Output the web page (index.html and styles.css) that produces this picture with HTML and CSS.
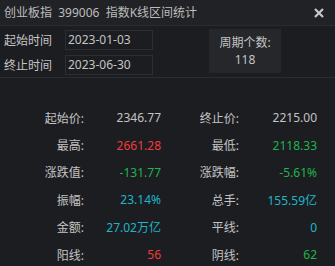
FILE: index.html
```html
<!DOCTYPE html>
<html lang="zh">
<head>
    <meta charset="UTF-8">
    <title>指数K线区间统计</title>
    <link rel="stylesheet" href="styles.css">
</head>
<body>
    <div class="dialog">
        <div class="titlebar">
            <span class="title">创业板指&nbsp;&nbsp;399006&nbsp;&nbsp;指数K线区间统计</span>
            <svg class="close" width="10" height="10" viewBox="0 0 10 10">
                <path d="M1 1 L9 9 M9 1 L1 9" stroke="#c9c9c9" stroke-width="2.2"/>
            </svg>
        </div>
        <div class="range">
            <div class="dates">
                <div class="daterow">
                    <span class="lbl">起始时间</span>
                    <div class="field">2023-01-03</div>
                </div>
                <div class="daterow">
                    <span class="lbl">终止时间</span>
                    <div class="field">2023-06-30</div>
                </div>
            </div>
            <div class="period">
                <p>周期个数:</p>
                <p>118</p>
            </div>
        </div>
        <div class="stats">
            <span class="k">起始价:</span><span class="v">2346.77</span>
            <span class="k">终止价:</span><span class="v">2215.00</span>

            <span class="k">最高:</span><span class="v up">2661.28</span>
            <span class="k">最低:</span><span class="v down">2118.33</span>

            <span class="k">涨跌值:</span><span class="v down">-131.77</span>
            <span class="k">涨跌幅:</span><span class="v down">-5.61%</span>

            <span class="k">振幅:</span><span class="v cyan">23.14%</span>
            <span class="k">总手:</span><span class="v cyan">155.59亿</span>

            <span class="k">金额:</span><span class="v cyan">27.02万亿</span>
            <span class="k">平线:</span><span class="v cyan">0</span>

            <span class="k">阳线:</span><span class="v up">56</span>
            <span class="k">阴线:</span><span class="v down">62</span>
        </div>
    </div>
</body>
</html>
```

FILE: styles.css
```css
body
{
    margin: 0;
    background-color: #1c1d21;
    font-family: "Noto Sans", "Noto Sans CJK SC", sans-serif;
    font-size: 12px;
    color: #c4c4c4;
}
.dialog
{
    width: 335px;
    height: 266px;
    overflow: hidden;
}
.titlebar
{
    height: 25px;
    background-color: #212226;
    border-bottom: 1px solid #2b2c30;
    display: flex;
    align-items: center;
    justify-content: space-between;
    padding: 0 11px 0 4px;
}
.title
{
    color: #bdbdbd;
    line-height: 25px;
}
.close
{
    display: block;
}
.range
{
    height: 51px;
    border-bottom: 1px solid #2b2c30;
    display: flex;
    padding-left: 4px;
}
.dates
{
    width: 205px;
    padding-top: 4px;
    display: flex;
    flex-direction: column;
    gap: 5px;
}
.daterow
{
    display: flex;
    align-items: center;
}
.lbl
{
    width: 61px;
}
.field
{
    width: 84px;
    height: 18px;
    border: 1px solid #2d2e32;
    line-height: 18px;
    padding-left: 2px;
}
.period
{
    width: 72px;
    height: 44px;
    margin-top: 3px;
    background-color: #26272b;
    display: flex;
    flex-direction: column;
    align-items: center;
    justify-content: center;
}
.period p
{
    margin: 0;
    line-height: 17px;
}
.stats
{
    display: grid;
    grid-template-columns: 84px 77px 78px 78px;
    grid-auto-rows: 27.4px;
    align-items: center;
    padding-top: 26px;
}
.stats span
{
    text-align: right;
}
.up
{
    color: #f23a3a;
}
.down
{
    color: #1fb44c;
}
.cyan
{
    color: #1cb6c9;
}
```
